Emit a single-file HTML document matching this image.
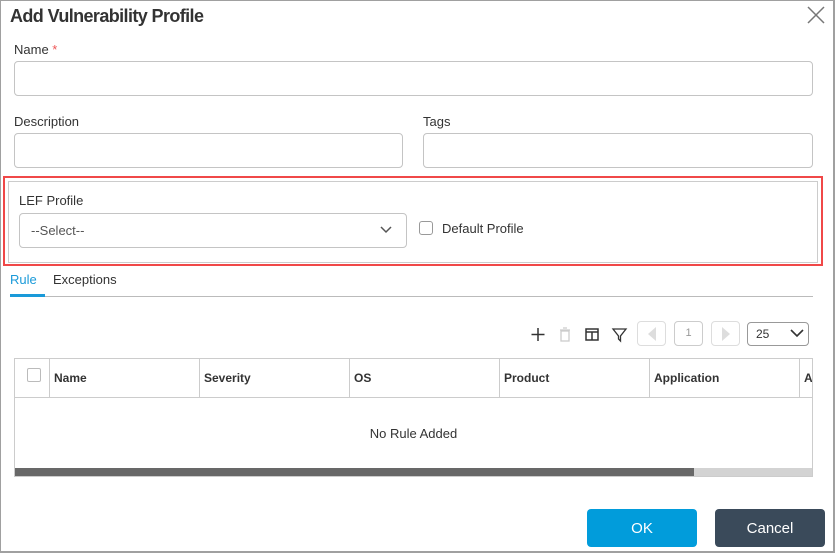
<!DOCTYPE html>
<html><head><meta charset="utf-8"><style>
*{box-sizing:border-box;margin:0;padding:0}
body{width:835px;height:553px;background:#fff;font-family:"Liberation Sans",sans-serif;color:#333;position:relative;overflow:hidden}
.a{position:absolute}
.inp{position:absolute;border:1px solid #c4c4c4;border-radius:4px;background:#fff}
.lbl{position:absolute;font-size:13px;color:#333}
</style></head><body>
<div class="a" style="left:0;top:0;width:835px;height:553px;border:1px solid #a0a0a0;border-right-width:2px;border-bottom-width:2px"></div>
<div class="a" style="left:10px;top:6px;font-size:18px;font-weight:bold;color:#333;letter-spacing:-0.6px">Add Vulnerability Profile</div>
<svg class="a" style="left:806px;top:5px" width="20" height="20"><path d="M2 2L18 18M18 2L2 18" stroke="#777" stroke-width="1.5"/></svg>
<div class="lbl" style="left:14px;top:42px">Name <span style="color:#e55">*</span></div>
<div class="inp" style="left:14px;top:61px;width:799px;height:35px"></div>
<div class="lbl" style="left:14px;top:114px">Description</div>
<div class="inp" style="left:14px;top:133px;width:389px;height:35px"></div>
<div class="lbl" style="left:423px;top:114px">Tags</div>
<div class="inp" style="left:423px;top:133px;width:390px;height:35px"></div>
<div class="a" style="left:3px;top:176px;width:820px;height:90px;border:2px solid #f04848"></div>
<div class="a" style="left:8px;top:181px;width:810px;height:82px;border:1px solid #ccc;border-top:none;border-right:none"></div>
<div class="a" style="left:8px;top:181px;width:810px;height:1px;background:#ccc"></div>
<div class="a" style="left:817px;top:181px;width:1px;height:82px;background:#ccc"></div>
<div class="lbl" style="left:19px;top:193px">LEF Profile</div>
<div class="inp" style="left:19px;top:213px;width:388px;height:35px"></div>
<div class="a" style="left:31px;top:223px;font-size:13px;color:#555">--Select--</div>
<svg class="a" style="left:379px;top:225px" width="14" height="10"><path d="M2 2L7 7L12 2" stroke="#555" stroke-width="1.5" fill="none"/></svg>
<div class="a" style="left:419px;top:221px;width:14px;height:14px;border:1px solid #999;border-radius:3px"></div>
<div class="lbl" style="left:442px;top:221px;color:#333">Default Profile</div>
<div class="a" style="left:10px;top:272px;font-size:13px;color:#1a9ad9">Rule</div>
<div class="a" style="left:53px;top:272px;font-size:13px;color:#333">Exceptions</div>
<div class="a" style="left:10px;top:296px;width:803px;height:1px;background:#bbb"></div>
<div class="a" style="left:10px;top:294px;width:35px;height:3px;background:#1a9ad9"></div>
<svg class="a" style="left:530px;top:326px" width="110" height="18">
<path d="M8 2V15M1.5 8.5H14.5" stroke="#333" stroke-width="1.5"/>
<rect x="31" y="5" width="8" height="10" fill="none" stroke="#ccc" stroke-width="1.3"/><path d="M30 4H40M33 2H37" stroke="#ccc" stroke-width="1.3"/>
<rect x="56" y="3" width="12" height="11" fill="none" stroke="#333" stroke-width="1.5"/><path d="M56 6H68M62 6V14" stroke="#333" stroke-width="1.5"/>
<path d="M83 3H96L90.5 10V15L88.5 13V10Z" fill="none" stroke="#333" stroke-width="1.3"/>
</svg>
<div class="inp" style="left:637px;top:321px;width:29px;height:25px;border-color:#ddd"></div>
<svg class="a" style="left:645px;top:326px" width="14" height="16"><path d="M11 1L3 8L11 15Z" fill="#ddd"/></svg>
<div class="inp" style="left:674px;top:321px;width:29px;height:25px;border-color:#ccc;font-size:11px;color:#999;text-align:center;line-height:23px">1</div>
<div class="inp" style="left:711px;top:321px;width:29px;height:25px;border-color:#ddd"></div>
<svg class="a" style="left:719px;top:326px" width="14" height="16"><path d="M3 1L11 8L3 15Z" fill="#ddd"/></svg>
<div class="inp" style="left:747px;top:322px;width:62px;height:24px;border-color:#999"></div>
<div class="a" style="left:756px;top:327px;font-size:12px;color:#333">25</div>
<svg class="a" style="left:789px;top:328px" width="16" height="10"><path d="M2 2L8 8L14 2" stroke="#333" stroke-width="1.6" fill="none"/></svg>
<div class="a" style="left:14px;top:358px;width:799px;height:119px;border:1px solid #ccc;overflow:hidden">
<div class="a" style="left:0;top:38px;width:799px;height:1px;background:#ccc"></div>
<div class="a" style="left:34px;top:0;width:1px;height:38px;background:#ccc"></div>
<div class="a" style="left:184px;top:0;width:1px;height:38px;background:#ccc"></div>
<div class="a" style="left:334px;top:0;width:1px;height:38px;background:#ccc"></div>
<div class="a" style="left:484px;top:0;width:1px;height:38px;background:#ccc"></div>
<div class="a" style="left:634px;top:0;width:1px;height:38px;background:#ccc"></div>
<div class="a" style="left:784px;top:0;width:1px;height:38px;background:#ccc"></div>
<div class="a" style="left:12px;top:9px;width:14px;height:14px;border:1px solid #bbb;border-radius:2px"></div>
<div class="a" style="left:39px;top:12px;font-size:12px;font-weight:bold">Name</div>
<div class="a" style="left:189px;top:12px;font-size:12px;font-weight:bold">Severity</div>
<div class="a" style="left:339px;top:12px;font-size:12px;font-weight:bold">OS</div>
<div class="a" style="left:489px;top:12px;font-size:12px;font-weight:bold">Product</div>
<div class="a" style="left:639px;top:12px;font-size:12px;font-weight:bold">Application</div>
<div class="a" style="left:789px;top:12px;font-size:12px;font-weight:bold">A</div>
<div class="a" style="left:0;top:67px;width:797px;text-align:center;font-size:13px;color:#333">No Rule Added</div>
<div class="a" style="left:0;top:109px;width:799px;height:9px;background:#d3d3d3"></div>
<div class="a" style="left:0;top:109px;width:679px;height:9px;background:#686868"></div>
</div>
<div class="a" style="left:587px;top:509px;width:110px;height:38px;background:#019cdb;border-radius:4px;color:#fff;font-size:15px;text-align:center;line-height:40px">OK</div>
<div class="a" style="left:715px;top:509px;width:110px;height:38px;background:#3a4a5a;border-radius:4px;color:#fff;font-size:15px;text-align:center;line-height:40px">Cancel</div>
</body></html>
